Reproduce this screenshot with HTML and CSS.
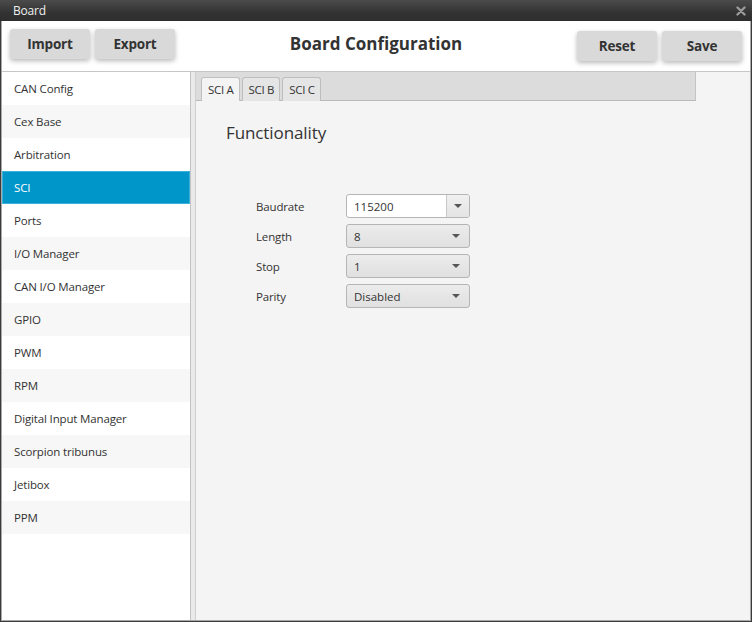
FILE: index.html
```html
<!DOCTYPE html>
<html>
<head>
<meta charset="utf-8">
<link rel="stylesheet" href="styles.css">
</head>
<body>
<div class="window">
  <div class="titlebar">
    <span class="title">Board</span>
    <svg class="close" width="10" height="10" viewBox="0 0 10 10"><path d="M1.5 1.5 L8.5 8.5 M8.5 1.5 L1.5 8.5" stroke="#9a9a9a" stroke-width="2.4" stroke-linecap="round"/></svg>
  </div>
  <div class="frame">
    <header class="toolbar">
      <div class="group left">
        <button class="btn">Import</button>
        <button class="btn">Export</button>
      </div>
      <h1 class="heading">Board Configuration</h1>
      <div class="group right">
        <button class="btn">Reset</button>
        <button class="btn">Save</button>
      </div>
    </header>
    <div class="main">
      <nav class="sidebar">
        <div class="item">CAN Config</div>
        <div class="item">Cex Base</div>
        <div class="item">Arbitration</div>
        <div class="item selected">SCI</div>
        <div class="item">Ports</div>
        <div class="item">I/O Manager</div>
        <div class="item">CAN I/O Manager</div>
        <div class="item">GPIO</div>
        <div class="item">PWM</div>
        <div class="item">RPM</div>
        <div class="item">Digital Input Manager</div>
        <div class="item">Scorpion tribunus</div>
        <div class="item">Jetibox</div>
        <div class="item">PPM</div>
      </nav>
      <div class="divider"></div>
      <section class="content">
        <div class="tabbar">
          <div class="tab active">SCI A</div>
          <div class="tab">SCI B</div>
          <div class="tab">SCI C</div>
        </div>
        <div class="panel">
          <h2 class="section-title">Functionality</h2>
          <div class="form">
            <label class="lbl">Baudrate</label>
            <div class="combo editable">
              <span class="value">115200</span>
              <span class="arrow-btn"><span class="arrow"></span></span>
            </div>
            <label class="lbl">Length</label>
            <div class="combo"><span class="value">8</span><span class="arrow"></span></div>
            <label class="lbl">Stop</label>
            <div class="combo"><span class="value">1</span><span class="arrow"></span></div>
            <label class="lbl">Parity</label>
            <div class="combo"><span class="value">Disabled</span><span class="arrow"></span></div>
          </div>
        </div>
      </section>
    </div>
  </div>
</div>
</body>
</html>
```
FILE: styles.css
```css
* { box-sizing: border-box; }
html, body { margin: 0; padding: 0; }
body {
  width: 752px;
  height: 622px;
  overflow: hidden;
  font-family: "Open Sans", "Noto Sans", sans-serif;
  font-size: 12px;
  color: #333;
  background: #3a3a3a;
}
.window {
  width: 752px;
  height: 622px;
  display: flex;
  flex-direction: column;
  background: #3b3b3b;
  padding: 0 1px 1px 1px;
}
.titlebar {
  height: 21px;
  flex: none;
  display: flex;
  align-items: center;
  justify-content: space-between;
  padding: 0 6px 0 13px;
  background: linear-gradient(#4b4b4b, #333 60%, #2e2e2e);
  margin: 0 -1px;
}
.title {
  color: #f0f0f0;
  font-size: 12px;
  letter-spacing: -0.2px;
}
.close { display: block; margin-top: 1px; }
.frame {
  flex: 1;
  display: flex;
  flex-direction: column;
  border: 1px solid #a8a8a8;
  border-top: 0;
  background: #f4f4f4;
  min-height: 0;
}
.toolbar {
  height: 51px;
  flex: none;
  display: grid;
  grid-template-columns: 1fr auto 1fr;
  align-items: start;
  padding: 0 8px;
  background: #fff;
  border-bottom: 1px solid #c6c6c6;
}
.group { display: flex; gap: 5px; }
.group.left { margin-top: 8px; }
.group.right { justify-content: flex-end; margin-top: 10px; }
.btn {
  width: 80px;
  height: 30px;
  border: 0;
  border-radius: 3px;
  background: #d9d9d9;
  box-shadow: 0 2px 5px rgba(0,0,0,0.28);
  font-family: "Open Sans", "Noto Sans", sans-serif;
  font-weight: 700;
  font-size: 13.5px;
  color: #333;
  padding: 0;
  letter-spacing: -0.2px;
}
.heading {
  margin: 11px 0 0 0;
  font-size: 17px;
  font-weight: 700;
  color: #333;
  letter-spacing: 0;
}
.main {
  flex: 1;
  display: flex;
  min-height: 0;
}
.sidebar {
  width: 188px;
  flex: none;
  background: #fff;
}
.item {
  height: 33px;
  display: flex;
  align-items: center;
  padding-left: 12px;
  font-size: 11.5px;
  letter-spacing: -0.15px;
  color: #333;
  background: #fff;
}
.item:nth-child(even) { background: #f7f7f7; }
.item.selected {
  background: #0096c9;
  color: #fff;
  box-shadow: inset 0 0 0 1px #3cb1d9;
}
.divider {
  width: 6px;
  flex: none;
  background: #eaeaea;
  border-left: 1px solid #c3c3c3;
  border-right: 1px solid #cfcfcf;
}
.content {
  flex: 1;
  background: #f4f4f4;
  display: flex;
  flex-direction: column;
}
.tabbar {
  width: 500px;
  height: 29px;
  flex: none;
  background: #dcdcdc;
  border-right: 1px solid #c4c4c4;
  border-bottom: 1px solid #b9b9b9;
  display: flex;
  align-items: flex-end;
  gap: 2px;
  padding-left: 5px;
}
.tab {
  height: 24px;
  padding: 0 5px 0 6px;
  display: flex;
  align-items: center;
  border: 1px solid #bdbdbd;
  border-bottom: 0;
  border-radius: 3px 3px 0 0;
  background: #e5e5e5;
  font-size: 11.5px;
  letter-spacing: -0.3px;
  color: #333;
  margin-bottom: -1px;
}
.tab.active {
  background: #f4f4f4;
  border-color: #c0c0c0;
}
.panel {
  padding: 20px 0 0 30px;
}
.section-title {
  margin: 0;
  font-size: 17px;
  font-weight: 400;
  color: #333;
  letter-spacing: -0.1px;
  line-height: 24px;
}
.form {
  margin: 49px 0 0 30px;
  display: grid;
  grid-template-columns: 90px 124px;
  grid-auto-rows: 24px;
  row-gap: 6px;
  align-items: center;
}
.lbl {
  font-size: 11.5px;
  letter-spacing: -0.15px;
  color: #333;
}
.combo {
  height: 24px;
  display: flex;
  align-items: center;
  justify-content: space-between;
  border: 1px solid #b5b5b5;
  border-radius: 3px;
  background: linear-gradient(#ececec, #e0e0e0);
  padding: 0 9px 0 7px;
  font-size: 11.5px;
  color: #333;
}
.combo.editable {
  background: #fff;
  padding: 0 0 0 7px;
  overflow: hidden;
}
.arrow-btn {
  width: 23px;
  height: 100%;
  display: flex;
  align-items: center;
  justify-content: center;
  border-left: 1px solid #c8c8c8;
  background: linear-gradient(#f0f0f0, #e4e4e4);
}
.arrow {
  width: 0;
  height: 0;
  border-left: 4px solid transparent;
  border-right: 4px solid transparent;
  border-top: 4px solid #555;
}
```
